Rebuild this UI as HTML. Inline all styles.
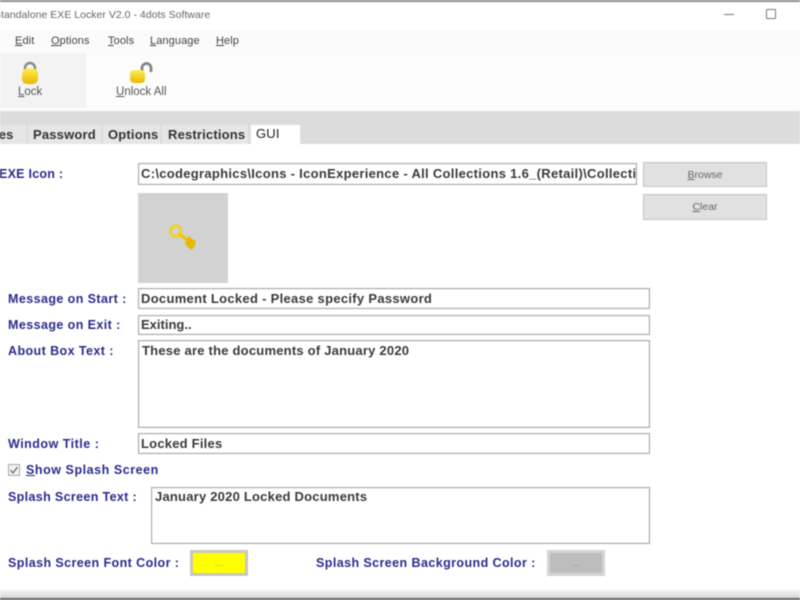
<!DOCTYPE html>
<html><head><meta charset="utf-8">
<style>
html,body{margin:0;padding:0;background:#fff}
#r{position:relative;width:800px;height:600px;overflow:hidden;background:#fff;font-family:"Liberation Sans",sans-serif;filter:blur(.5px)}
#r div,#r span.a{position:absolute;white-space:nowrap;box-sizing:border-box}
.m{font-size:11px;color:#444;top:34px;line-height:14px;letter-spacing:.1px}
.t{font-size:11.5px;color:#555;line-height:14px}
.tab{font-size:13px;font-weight:bold;color:#333;top:128px;line-height:14px;letter-spacing:.18px}
.l{font-size:12.5px;font-weight:bold;color:#2b2b8c;line-height:14px;letter-spacing:.42px}
.i{background:#fff;border:1px solid #a8a8a8;box-shadow:inset 0 0 1px #bbb;font-size:13px;font-weight:bold;color:#3a3a3a;line-height:14px;letter-spacing:.22px;overflow:hidden;padding-left:2px}
.b{background:#e1e1e1;border:1px solid #c4c4c4;font-size:10.5px;color:#666;text-align:center;line-height:24px}
u{text-decoration:underline}
</style></head><body>
<div id="r">
<div style="left:0;top:0;width:800px;height:2px;background:#8f8f8f"></div>
<div style="left:-6px;top:8px;font-size:10.5px;color:#666;line-height:14px;letter-spacing:.02px">Standalone EXE Locker V2.0 - 4dots Software</div>
<div style="left:724px;top:14px;width:10px;height:1px;background:#777"></div>
<div style="left:766px;top:9px;width:10px;height:10px;border:1px solid #777;border-radius:1px"></div>
<div style="left:0;top:30px;width:800px;height:23px;background:#fbfbfb"></div>
<div class="m" style="left:15px"><u>E</u>dit</div>
<div class="m" style="left:51px"><u>O</u>ptions</div>
<div class="m" style="left:108px"><u>T</u>ools</div>
<div class="m" style="left:150px"><u>L</u>anguage</div>
<div class="m" style="left:216px"><u>H</u>elp</div>
<div style="left:0;top:53px;width:800px;height:58px;background:#fcfcfc"></div>
<div style="left:0;top:53px;width:86px;height:55px;background:#f3f3f3"></div>
<svg style="position:absolute;left:20px;top:61px" width="20" height="25" viewBox="0 0 20 25"><defs><linearGradient id="g" x1="0" y1="0" x2="0" y2="1"><stop offset="0" stop-color="#ffee55"/><stop offset="1" stop-color="#e8b800"/></linearGradient></defs><path d="M5 10V7a5 5 0 0 1 10 0v3" fill="none" stroke="#8a8a8a" stroke-width="2.4"/><rect x="2" y="7.500" width="16" height="15.500" rx="5" fill="url(#g)"/></svg>
<div class="t" style="left:18px;top:85px"><u>L</u>ock</div>
<svg style="position:absolute;left:128px;top:61px" width="28" height="24" viewBox="0 0 28 24"><path d="M14 11V7a4.500 4.500 0 0 1 9 0v4" fill="none" stroke="#858585" stroke-width="2.800"/><rect x="2" y="9" width="15" height="13" rx="4" fill="url(#g)"/></svg>
<div class="t" style="left:116px;top:85px"><u>U</u>nlock All</div>
<div style="left:0;top:111px;width:800px;height:33px;background:#dcdcdc"></div>
<div style="left:0;top:125px;width:26px;height:19px;background:#e6e6e6"></div>
<div style="left:28px;top:125px;width:73px;height:19px;background:#e6e6e6"></div>
<div style="left:103px;top:125px;width:57px;height:19px;background:#e6e6e6"></div>
<div style="left:162px;top:125px;width:86px;height:19px;background:#e6e6e6"></div>
<div style="left:250px;top:124px;width:51px;height:20px;background:#fff;border:1px solid #e2e2e2;border-bottom:0"></div>
<div class="tab" style="left:-17px">Files</div>
<div class="tab" style="left:33px">Password</div>
<div class="tab" style="left:108px">Options</div>
<div class="tab" style="left:168px">Restrictions</div>
<div class="tab" style="left:256px;top:127px;font-weight:normal;color:#222">GUI</div>

<div class="l" style="left:-1px;top:167px;letter-spacing:.25px">EXE Icon :</div>
<div class="i" style="left:138px;top:163px;width:499px;height:22px;padding-top:3px;letter-spacing:.3px">C:\codegraphics\Icons - IconExperience - All Collections 1.6_(Retail)\Collections</div>
<div class="b" style="left:643px;top:162px;width:124px;height:25px"><u>B</u>rowse</div>
<div class="b" style="left:643px;top:194px;width:124px;height:26px"><u>C</u>lear</div>
<div style="left:138px;top:193px;width:90px;height:90px;background:#d2d2d2"></div>
<svg style="position:absolute;left:166px;top:222px" width="32" height="32" viewBox="0 0 32 32"><ellipse cx="9.500" cy="9" rx="5" ry="5.500" fill="none" stroke="#f2d21f" stroke-width="2.800" transform="rotate(30 9.500 9)"/><path d="M13 12l10 7" stroke="#f4c800" stroke-width="3.400" fill="none"/><path d="M20 18l3-4 3 3 4 2-1 4-3 5-3-2-4-4z" fill="#e8b800"/></svg>

<div class="l" style="left:8px;top:292px">Message on Start :</div>
<div class="i" style="left:138px;top:288px;width:512px;height:21px;padding-top:3px;letter-spacing:.3px">Document Locked - Please specify Password</div>
<div class="l" style="left:8px;top:318px">Message on Exit :</div>
<div class="i" style="left:138px;top:315px;width:512px;height:20px;padding-top:2px;letter-spacing:0">Exiting..</div>
<div class="l" style="left:8px;top:344px">About Box Text :</div>
<div class="i" style="left:138px;top:340px;width:512px;height:88px;padding:3px 0 0 3px">These are the documents of January 2020</div>
<div class="l" style="left:8px;top:437px;letter-spacing:.5px">Window Title :</div>
<div class="i" style="left:138px;top:433px;width:512px;height:21px;padding-top:3px">Locked Files</div>
<div style="left:8px;top:464px;width:12px;height:12px;background:#f2f2f2;border:1px solid #aaa"></div>
<svg style="position:absolute;left:8px;top:464px" width="12" height="12" viewBox="0 0 12 12"><path d="M2.500 6l2.500 3 4.500-6" fill="none" stroke="#666" stroke-width="1.200"/></svg>
<div class="l" style="left:26px;top:463px;letter-spacing:.55px"><u>S</u>how Splash Screen</div>
<div class="l" style="left:8px;top:490px;letter-spacing:.35px">Splash Screen Text :</div>
<div class="i" style="left:151px;top:487px;width:499px;height:57px;padding:2px 0 0 3px">January 2020 Locked Documents</div>
<div class="l" style="left:8px;top:556px;letter-spacing:.42px">Splash Screen Font Color :</div>
<div style="left:190px;top:550px;width:58px;height:26px;background:#ff0;border:3px solid #c8c8c0;font-size:10px;color:#999;text-align:center;line-height:22px">...</div>
<div class="l" style="left:316px;top:556px">Splash Screen Background Color :</div>
<div style="left:547px;top:550px;width:58px;height:26px;background:#bdbdbd;border:3px solid #d4d4d4;font-size:10px;color:#999;text-align:center;line-height:22px">...</div>
<div style="left:0;top:590px;width:800px;height:8px;background:linear-gradient(#f4f4f4,#d6d6d6)"></div>
<div style="left:0;top:598px;width:800px;height:2px;background:#666"></div>
</div>
</body></html>
